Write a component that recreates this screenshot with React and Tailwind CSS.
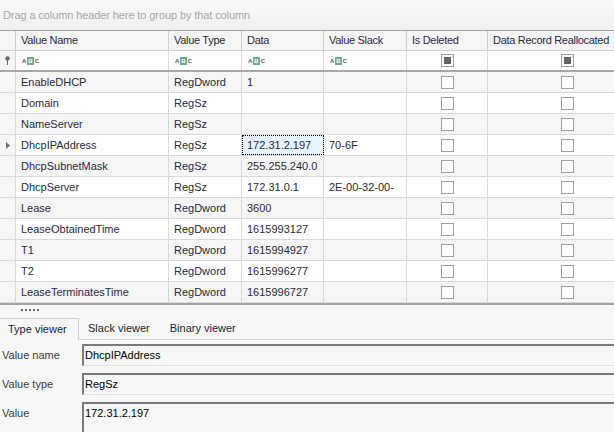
import { useState } from "react";

const cols = [
  { key: "name", label: "Value Name", w: "w-[153px]", kind: "text" },
  { key: "type", label: "Value Type", w: "w-[73px]", kind: "text" },
  { key: "data", label: "Data", w: "w-[82px]", kind: "text" },
  { key: "slack", label: "Value Slack", w: "w-[83px]", kind: "text" },
  { key: "deleted", label: "Is Deleted", w: "w-[81px]", kind: "check" },
  { key: "realloc", label: "Data Record Reallocated", w: "w-[160px]", kind: "check" },
];

const rows = [
  { name: "EnableDHCP", type: "RegDword", data: "1", slack: "" },
  { name: "Domain", type: "RegSz", data: "", slack: "" },
  { name: "NameServer", type: "RegSz", data: "", slack: "" },
  { name: "DhcpIPAddress", type: "RegSz", data: "172.31.2.197", slack: "70-6F" },
  { name: "DhcpSubnetMask", type: "RegSz", data: "255.255.240.0", slack: "" },
  { name: "DhcpServer", type: "RegSz", data: "172.31.0.1", slack: "2E-00-32-00-" },
  { name: "Lease", type: "RegDword", data: "3600", slack: "" },
  { name: "LeaseObtainedTime", type: "RegDword", data: "1615993127", slack: "" },
  { name: "T1", type: "RegDword", data: "1615994927", slack: "" },
  { name: "T2", type: "RegDword", data: "1615996277", slack: "" },
  { name: "LeaseTerminatesTime", type: "RegDword", data: "1615996727", slack: "" },
];

// little "ABC" filter glyph from the auto-filter row
function AbcIcon() {
  return (
    <span className="inline-flex items-center gap-[1px] text-[6px] leading-none text-[#5a5a5a] font-bold">
      <span>A</span>
      <span className="bg-[#6fa890] text-white px-[1px] py-[1px]">B</span>
      <span>C</span>
    </span>
  );
}

function Checkbox({ filled }) {
  return (
    <div className="w-[13px] h-[13px] border border-[#a0a0a0] bg-white flex items-center justify-center">
      {filled && <div className="w-[7px] h-[7px] bg-[#5f6463]" />}
    </div>
  );
}

function TextBox({ value, tall }) {
  return (
    <div
      className={`flex-1 ${tall ? "h-[40px]" : "h-[22px]"} border-t-2 border-l-2 border-t-[#7c7c7c] border-l-[#7c7c7c] border-b border-b-[#e4e4e4] bg-[#f7f7f7] pl-[1px] pt-[2px] leading-[14px] text-[11px] text-black`}
    >
      {value}
    </div>
  );
}

export default function App() {
  const [tab] = useState(0);
  const tabs = ["Type viewer", "Slack viewer", "Binary viewer"];

  return (
    <div className="w-[614px] h-[432px] overflow-hidden bg-[#f7f7f7] font-['Liberation_Sans',Arial,sans-serif] text-[11px] text-[#2a2a3c]">
      {/* Group panel */}
      <div className="h-[30px] flex items-center pl-[3px] bg-gradient-to-b from-[#f8f8f8] to-[#eef0ee] text-[#a8a8a8] text-[11px] tracking-[-0.1px]">
        Drag a column header here to group by that column
      </div>

      {/* Grid */}
      <div className="border-t border-b-2 border-t-[#a3a3a3] border-b-[#a3a3a3] overflow-hidden">
        {/* Header */}
        <div className="h-[20px] flex bg-[#f5f5f5] border-b border-[#cfcfcf]">
          <div className="w-[16px] shrink-0 border-r border-[#cfcfcf]" />
          {cols.map((c) => (
            <div key={c.key} className={`${c.w} shrink-0 border-r border-[#cfcfcf] flex items-center pl-[5px] whitespace-nowrap overflow-hidden tracking-[-0.3px]`}>
              {c.label}
            </div>
          ))}
        </div>

        {/* Filter row */}
        <div className="h-[21px] flex bg-white border-b-2 border-[#a8a8a8]">
          <div className="w-[16px] shrink-0 border-r border-[#cfcfcf] flex items-center justify-center bg-[#f5f5f5]">
            <svg width="7" height="9" viewBox="0 0 7 9">
              <circle cx="3.5" cy="2.5" r="2.2" fill="#6a6a6a" />
              <rect x="3" y="4" width="1" height="5" fill="#6a6a6a" />
            </svg>
          </div>
          {cols.map((c) => (
            <div
              key={c.key}
              className={`${c.w} shrink-0 border-r border-[#dadada] flex items-center ${c.kind === "check" ? "justify-center" : "pl-[6px]"}`}
            >
              {c.kind === "check" ? <Checkbox filled /> : <AbcIcon />}
            </div>
          ))}
        </div>

        {/* Data rows */}
        {rows.map((r, i) => (
          <div key={r.name} className={`h-[21px] flex border-b border-[#d9d9d9] ${i % 2 === 0 ? "bg-[#f5f5f5]" : "bg-white"}`}>
            <div className="w-[16px] shrink-0 border-r border-[#d9d9d9] bg-[#f5f5f5] flex items-center justify-center">
              {r.name === "DhcpIPAddress" && (
                <svg width="4" height="7" viewBox="0 0 4 7">
                  <path d="M0 0 L4 3.5 L0 7 Z" fill="#707070" />
                </svg>
              )}
            </div>
            {cols.map((c) => {
              const focused = r.name === "DhcpIPAddress" && c.key === "data";
              return (
                <div
                  key={c.key}
                  className={`${c.w} shrink-0 border-r border-[#d9d9d9] flex items-center whitespace-nowrap overflow-hidden ${
                    c.kind === "check" ? "justify-center" : "pl-[5px]"
                  } ${focused ? "bg-[#e5f3fc] outline outline-1 outline-dotted outline-black -outline-offset-1" : ""}`}
                >
                  {c.kind === "check" ? <Checkbox /> : r[c.key]}
                </div>
              );
            })}
          </div>
        ))}
      </div>

      {/* Splitter */}
      <div className="h-[13px] flex items-start pt-[4px] pl-[21px] gap-[2px]">
        {[0, 1, 2, 3, 4].map((d) => (
          <div key={d} className="w-[2px] h-[2px] bg-[#6a6a6a]" />
        ))}
      </div>

      {/* Tabs */}
      <div className="h-[22px] flex">
        {tabs.map((t, i) =>
          i === tab ? (
            <div key={t} className="w-[79px] border-t border-r border-[#cfcfcf] flex items-center pl-[8px] text-[11px] text-[#1e1e2e]">
              {t}
            </div>
          ) : (
            <div key={t} className="border-b border-[#d6d6d6] flex items-center pl-[9px] pr-[11px] text-[11px] text-[#1e1e2e]">
              {t}
            </div>
          )
        )}
        <div className="flex-1 border-b border-[#d6d6d6]" />
      </div>

      {/* Type viewer form */}
      <div className="pt-[4px] flex flex-col gap-[7px]">
        <div className="flex">
          <div className="w-[82px] pl-[2px] pt-[3px] text-[11px] text-[#3a3a3a]">Value name</div>
          <TextBox value="DhcpIPAddress" />
        </div>
        <div className="flex">
          <div className="w-[82px] pl-[2px] pt-[3px] text-[11px] text-[#3a3a3a]">Value type</div>
          <TextBox value="RegSz" />
        </div>
        <div className="flex">
          <div className="w-[82px] pl-[2px] pt-[3px] text-[11px] text-[#3a3a3a]">Value</div>
          <TextBox value="172.31.2.197" tall />
        </div>
      </div>
    </div>
  );
}
